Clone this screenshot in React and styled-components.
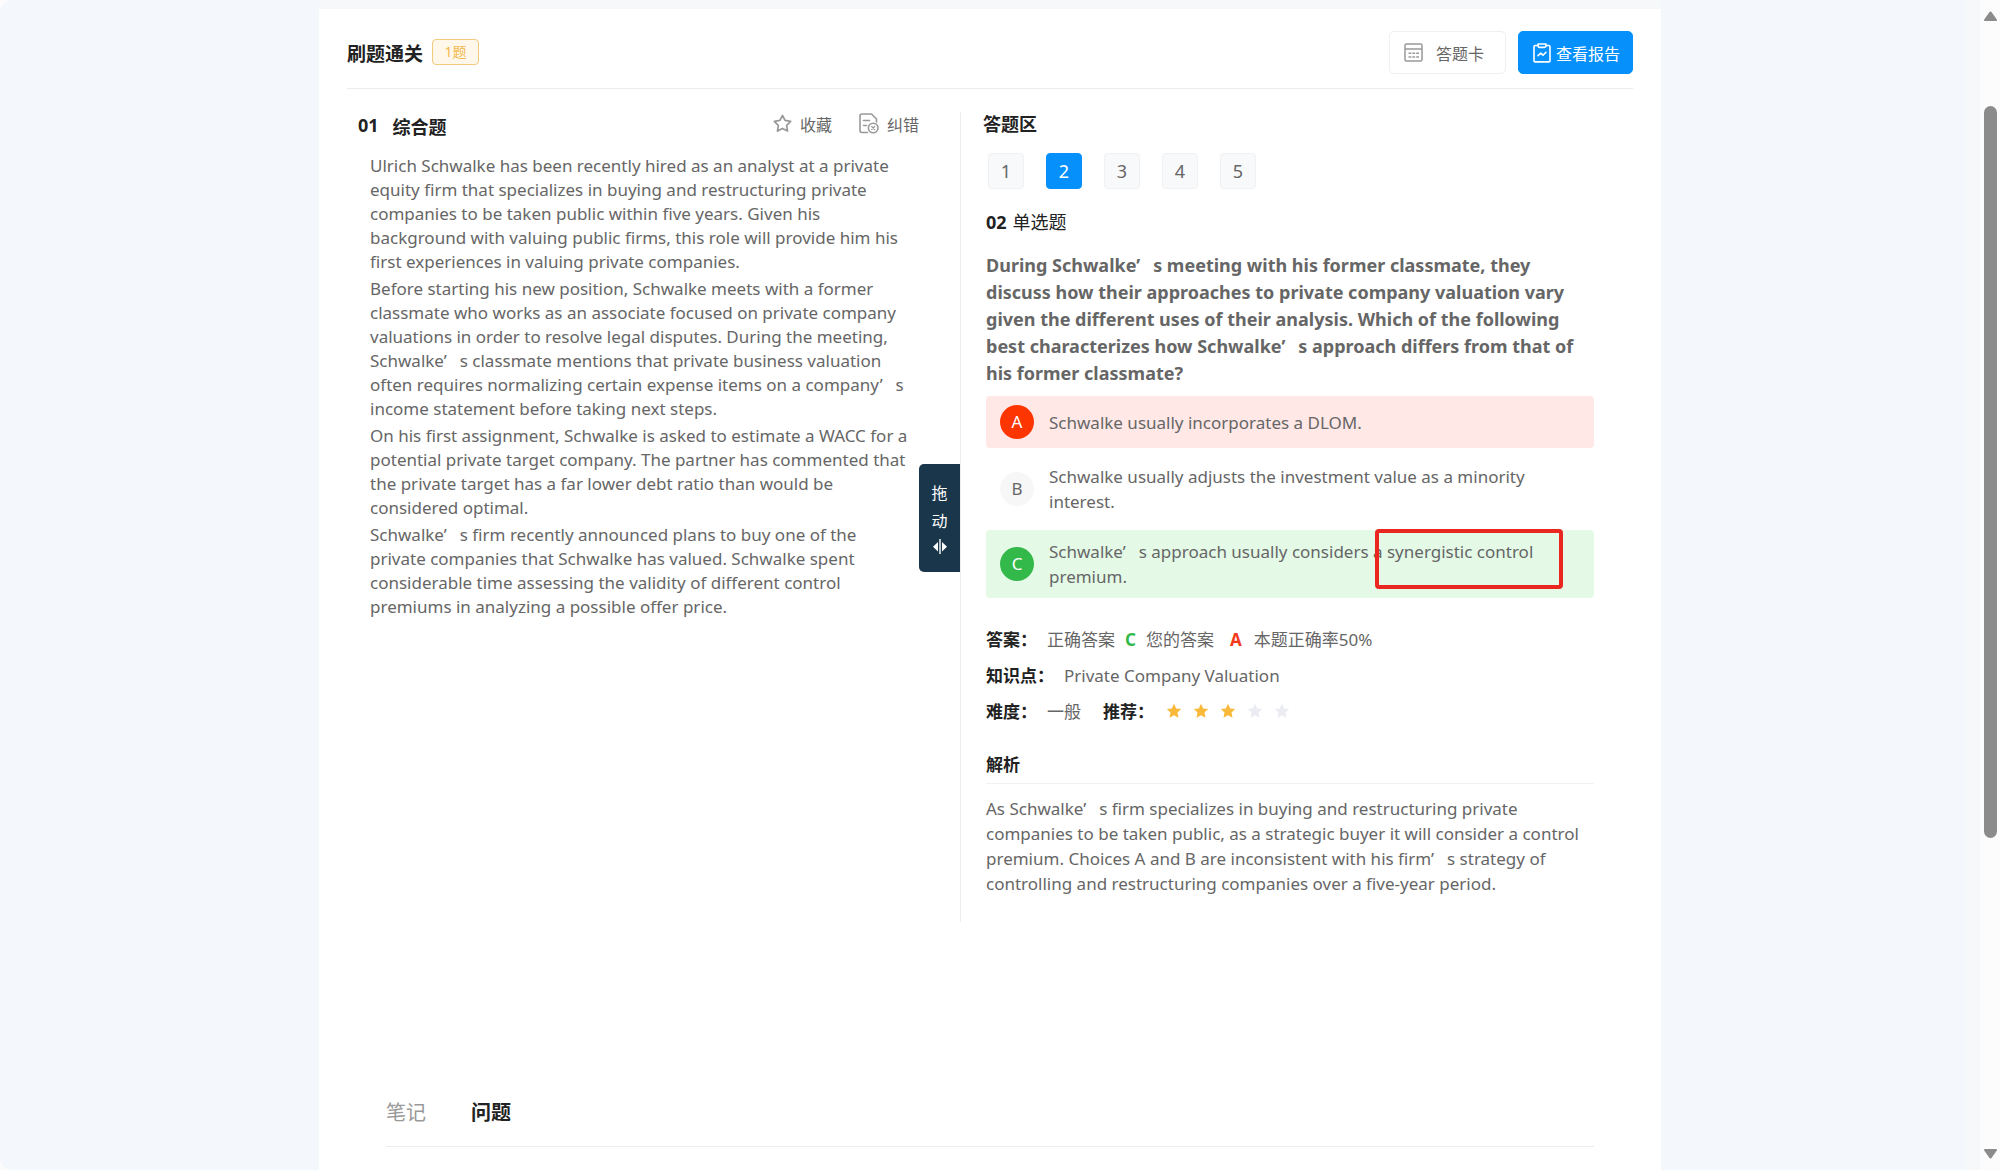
import React, { useState } from 'react';
import styled, { createGlobalStyle, css } from 'styled-components';

const GlobalStyle = createGlobalStyle`
    * {
        box-sizing: border-box;
    }

    body {
        margin: 0;
        background-color: #fcfcfc;
        color: #666;
        font-family: "Noto Sans", "Noto Sans CJK SC", sans-serif;
        font-size: 17px;
    }

    h1, h2, h3, p, ul, ol, dl, dd {
        margin: 0;
        padding: 0;
        font-size: inherit;
    }

    ul, ol {
        list-style: none;
    }

    button {
        padding: 0;
        border: 0;
        background: none;
        color: inherit;
        font: inherit;
        cursor: pointer;
    }

    svg {
        display: block;
        flex: none;
    }
`;

const Page = styled.div`
    display: flex;
    height: 100vh;
    overflow: hidden;
`;

const Content = styled.main`
    flex: 1;
    display: flex;
    justify-content: center;
    padding-top: 9px;
    overflow: hidden;
    background-color: #f4f8fc;
    border-right: 14px solid #f7f8f9;
    border-top-left-radius: 12px;
    border-bottom-left-radius: 12px;
    /* the strip on the right is part of the centred width */
    padding-left: 14px;
`;

const Card = styled.section`
    width: 100%;
    max-width: 1342px;
    padding: 0 28px;
    background-color: #fff;
    box-shadow: 0 -9px 0 #f7f8f9;
`;

const Header = styled.header`
    display: flex;
    align-items: center;
    height: 80px;
    padding-top: 10px;
    border-bottom: 1px solid #ececec;

    h1 {
        color: #222;
        font-size: 19px;
        line-height: 28px;
    }
`;

const CountBadge = styled.span`
    width: 47px;
    margin: 0 auto 4px 9px;
    border: 1px solid #f3cb7c;
    border-radius: 4px;
    background-color: #fff8ea;
    color: #f2b84b;
    font-size: 14px;
    line-height: 24px;
    text-align: center;
`;

const HeaderButton = styled.button`
    display: flex;
    align-items: center;
    gap: ${({ $primary }) => ($primary ? 5 : 13)}px;
    width: ${({ $primary }) => ($primary ? 115 : 117)}px;
    height: 43px;
    margin-left: 12px;
    margin-bottom: 2px;
    padding-left: 14px;
    border: 1px solid ${({ $primary }) => ($primary ? '#0590fc' : '#f0f0f0')};
    border-radius: 5px;
    background-color: ${({ $primary }) => ($primary ? '#0590fc' : '#fff')};
    color: ${({ $primary }) => ($primary ? '#fff' : '#666')};
    font-size: 16px;
`;

const Columns = styled.div`
    display: grid;
    grid-template-columns: 614fr 672fr;
    margin-top: 23px;
`;

const LeftColumn = styled.div`
    position: relative;
    padding: 0 41px 0 11px;
    border-right: 1px solid #eee;
`;

const LeftHead = styled.div`
    display: flex;
    align-items: center;
    height: 28px;

    h2 {
        display: flex;
        gap: 14px;
        margin-right: auto;
        color: #222;
        font-size: 18px;
    }
`;

const ToolButton = styled.button`
    display: flex;
    align-items: center;
    gap: 8px;
    height: 24px;
    margin-left: 27px;
    margin-bottom: 5px;
    font-size: 16px;
`;

const Passage = styled.div`
    margin: 14px 4px 0 12px;
    line-height: 24px;

    p + p {
        margin-top: 3px;
    }
`;

const DragHandle = styled.button`
    position: absolute;
    top: 352px;
    right: 0;
    display: flex;
    flex-direction: column;
    align-items: center;
    justify-content: center;
    width: 41px;
    height: 108px;
    padding-top: 2px;
    border-radius: 5px 0 0 5px;
    background-color: #19364b;
    color: #fff;
    font-size: 16px;
    line-height: 28px;
    cursor: ew-resize;
`;

const RightColumn = styled.div`
    padding: 0 39px 26px 25px;

    h2 {
        margin-left: -3px;
        color: #222;
        font-size: 18px;
        line-height: 24px;
    }
`;

const NumberList = styled.ol`
    display: flex;
    gap: 22px;
    margin: 17px 0 0 2px;
`;

const NumberButton = styled.button`
    width: 36px;
    height: 36px;
    border: 1px solid ${({ $active }) => ($active ? '#0590fc' : '#f0f1f3')};
    border-radius: 4px;
    background-color: ${({ $active }) => ($active ? '#0590fc' : '#f7f9fb')};
    color: ${({ $active }) => ($active ? '#fff' : '#666')};
    font-size: 18px;
`;

const QuestionType = styled.h3`
    display: flex;
    gap: 6px;
    margin-top: 21px;
    color: #222;
    font-size: 18px;
    font-weight: 400;
    line-height: 24px;
`;

const QuestionText = styled.p`
    margin-top: 18px;
    font-size: 18px;
    font-weight: 700;
    line-height: 27px;
`;

const OptionList = styled.ul`
    display: flex;
    flex-direction: column;
    gap: 7px;
    margin-top: 9px;

    li {
        position: relative;
    }
`;

const optionStates = {
    wrong: css`
        background-color: #ffe8e6;

        .letter {
            background-color: #fd3500;
            color: #fff;
        }
    `,
    right: css`
        background-color: #e4fae6;

        .letter {
            background-color: #32b94a;
            color: #fff;
        }
    `,
};

const OptionButton = styled.button`
    display: flex;
    align-items: center;
    gap: 15px;
    width: 100%;
    min-height: 51px;
    padding: 9px 50px 9px 14px;
    border-radius: 4px;
    line-height: 25px;
    text-align: left;

    .letter {
        flex: none;
        width: 34px;
        border-radius: 50%;
        background-color: #f7f7f8;
        line-height: 34px;
        text-align: center;
    }

    ${({ $state }) => optionStates[$state]}
`;

const Highlight = styled.span`
    position: absolute;
    top: -1px;
    right: 31px;
    width: 188px;
    height: 60px;
    border: 4px solid #ea2620;
    border-radius: 4px;
    pointer-events: none;
`;

const ResultList = styled.dl`
    margin-top: 24px;
    line-height: 36px;

    > div {
        display: flex;
        align-items: center;
    }

    dt {
        margin-right: 10px;
        color: #222;
        font-weight: 700;
    }

    dd + dt {
        margin-left: 22px;
    }
`;

const Answer = styled.b`
    margin: ${({ $wide }) => ($wide ? '0 12px 0 16px' : '0 10px')};
    color: ${({ $right }) => ($right ? '#32b94a' : '#f23a1d')};
`;

const Stars = styled.dd`
    display: flex;
    gap: 11px;
    padding: 0 0 3px 2px;
`;

const AnalysisTitle = styled.h3`
    margin-top: 17px;
    border-bottom: 1px solid #f0f0f0;
    color: #222;
    line-height: 36px;
`;

const AnalysisText = styled.p`
    margin-top: 12px;
    line-height: 25px;
`;

const Tabs = styled.nav`
    display: flex;
    gap: 45px;
    margin: 156px 39px 0;
    border-bottom: 1px solid #ececec;
`;

const TabButton = styled.button`
    height: 68px;
    padding-bottom: 2px;
    color: ${({ $active }) => ($active ? '#222' : '#999')};
    font-size: 20px;
    font-weight: ${({ $active }) => ($active ? 700 : 400)};
`;

const QuoteMark = styled.span`
    padding-right: 13px;
`;

const Scrollbar = styled.div`
    display: flex;
    flex-direction: column;
    align-items: center;
    width: 20px;
    padding: 11px 0 11px 1px;
`;

const Track = styled.div`
    flex: 1;
    display: grid;
    grid-template-rows: 85fr 732fr 311fr;
    width: 13px;
`;

const Thumb = styled.div`
    grid-row: 2;
    border-radius: 7px;
    background-color: #8b8b8b;
`;

const CardIcon = () => (
    <svg width="19" height="19" viewBox="0 0 19 19" fill="none" stroke="#999" strokeWidth="1.5">
        <rect x="1" y="1" width="17" height="17" rx="1.5" />
        <path d="M1 6h17M4.500 10.300h2.800M8.300 10.300h2.800M12.200 10.300h2.800M4.500 14h2.800M8.300 14h2.800M12.200 14h2.800" />
    </svg>
);

const ReportIcon = () => (
    <svg width="18" height="20" viewBox="0 0 18 20" fill="none" stroke="#fff" strokeWidth="1.6" strokeLinecap="round" strokeLinejoin="round">
        <path d="M5 2.5H2.2a1.2 1.2 0 0 0-1.2 1.2v14a1.2 1.2 0 0 0 1.2 1.2h13.6a1.2 1.2 0 0 0 1.2-1.2v-14a1.2 1.2 0 0 0-1.2-1.2H13" />
        <path d="M5 1h8v1.800a1.600 1.600 0 0 1-1.600 1.600H6.600a1.600 1.600 0 0 1-1.600-1.600z" />
        <path d="M5 12.700l2.800-2.600 2.200 2.200 3-3" />
    </svg>
);

const CollectIcon = () => (
    <svg width="19" height="19" viewBox="0 0 20 20" fill="none" stroke="#999" strokeWidth="1.8" strokeLinejoin="round">
        <path d="M10 1.500l2.700 5.300 5.900.9-4.200 4.200.9 6L10 15.200l-5.300 2.700.9-6L1.400 7.700l5.900-.9z" />
    </svg>
);

const ErrorIcon = () => (
    <svg width="20" height="21" viewBox="0 0 20 21" fill="none" stroke="#999" strokeWidth="1.600" strokeLinecap="round" strokeLinejoin="round">
        <path d="M8.500 19.500H3a2 2 0 0 1-2-2V3a2 2 0 0 1 2-2h9.500L17.500 6v3" />
        <path d="M4.500 7.500h6M4.500 12.500h3" />
        <circle cx="14.200" cy="15" r="4.800" />
        <path d="M12.700 13.500l3 3M15.700 13.500l-3 3" strokeWidth="1.200" />
    </svg>
);

const DragIcon = () => (
    <svg width="14" height="24" viewBox="0 0 14 24" fill="#fff">
        <path d="M7.700 4v15H6.300V4zM5 7v9.500L0 11.700zM9 7v9.500l5-4.800z" />
    </svg>
);

const StarIcon = ({ filled }) => (
    <svg width="16" height="16" viewBox="0 0 16 16" fill={filled ? '#f9b93a' : '#ebecf1'}>
        <path d="M8 .8l2.200 4.700 5 .6-3.700 3.500 1 5.100L8 12.200l-4.500 2.500 1-5.100L.8 6.100l5-.6z" />
    </svg>
);

const ArrowIcon = ({ down }) => (
    <svg width="13" height="10" viewBox="0 0 13 10" fill="#8b8b8b">
        <path d={down ? 'M1 0h11a1 1 0 0 1 .8 1.600L7.500 9a1.300 1.300 0 0 1-2 0L.2 1.600A1 1 0 0 1 1 0z' : 'M1 10h11a1 1 0 0 0 .8-1.600L7.500 1a1.300 1.300 0 0 0-2 0L.2 8.400A1 1 0 0 0 1 10z'} />
    </svg>
);

// apostrophes take a full-width cell, like the rest of the Chinese punctuation
const Quoted = ({ children }) =>
    children.split('’').map((part, i) => (
        <React.Fragment key={i}>
            {i > 0 && <QuoteMark>’</QuoteMark>}
            {part}
        </React.Fragment>
    ));

const passage = [
    'Ulrich Schwalke has been recently hired as an analyst at a private equity firm that specializes in buying and restructuring private companies to be taken public within five years. Given his background with valuing public firms, this role will provide him his first experiences in valuing private companies.',
    'Before starting his new position, Schwalke meets with a former classmate who works as an associate focused on private company valuations in order to resolve legal disputes. During the meeting, Schwalke’s classmate mentions that private business valuation often requires normalizing certain expense items on a company’s income statement before taking next steps.',
    'On his first assignment, Schwalke is asked to estimate a WACC for a potential private target company. The partner has commented that the private target has a far lower debt ratio than would be considered optimal.',
    'Schwalke’s firm recently announced plans to buy one of the private companies that Schwalke has valued. Schwalke spent considerable time assessing the validity of different control premiums in analyzing a possible offer price.',
];

const options = [
    { letter: 'A', text: 'Schwalke usually incorporates a DLOM.', state: 'wrong' },
    { letter: 'B', text: 'Schwalke usually adjusts the investment value as a minority interest.' },
    { letter: 'C', text: 'Schwalke’s approach usually considers a synergistic control premium.', state: 'right', marked: true },
];

const App = () => {
    const [current, setCurrent] = useState(2);
    const [tab, setTab] = useState('问题');

    return (
        <Page>
            <GlobalStyle />
            <Content>
                <Card>
                    <Header>
                        <h1>刷题通关</h1>
                        <CountBadge>1题</CountBadge>
                        <HeaderButton type='button'><CardIcon />答题卡</HeaderButton>
                        <HeaderButton type='button' $primary><ReportIcon />查看报告</HeaderButton>
                    </Header>
                    <Columns>
                        <LeftColumn>
                            <LeftHead>
                                <h2><span>01</span><span>综合题</span></h2>
                                <ToolButton type='button'><CollectIcon />收藏</ToolButton>
                                <ToolButton type='button'><ErrorIcon />纠错</ToolButton>
                            </LeftHead>
                            <Passage>
                                {passage.map(text => <p key={text}><Quoted>{text}</Quoted></p>)}
                            </Passage>
                            <DragHandle type='button'>
                                <span>拖</span>
                                <span>动</span>
                                <DragIcon />
                            </DragHandle>
                        </LeftColumn>
                        <RightColumn>
                            <h2>答题区</h2>
                            <NumberList>
                                {[1, 2, 3, 4, 5].map(n => (
                                    <li key={n}>
                                        <NumberButton type='button' $active={n === current} onClick={() => setCurrent(n)}>{n}</NumberButton>
                                    </li>
                                ))}
                            </NumberList>
                            <QuestionType><b>02</b><span>单选题</span></QuestionType>
                            <QuestionText>
                                <Quoted>During Schwalke’s meeting with his former classmate, they discuss how their approaches to private company valuation vary given the different uses of their analysis. Which of the following best characterizes how Schwalke’s approach differs from that of his former classmate?</Quoted>
                            </QuestionText>
                            <OptionList>
                                {options.map(({ letter, text, state, marked }) => (
                                    <li key={letter}>
                                        <OptionButton type='button' $state={state}>
                                            <span className='letter'>{letter}</span>
                                            <span><Quoted>{text}</Quoted></span>
                                        </OptionButton>
                                        {marked && <Highlight />}
                                    </li>
                                ))}
                            </OptionList>
                            <ResultList>
                                <div>
                                    <dt>答案：</dt>
                                    <dd>正确答案<Answer $right>C</Answer>您的答案<Answer $wide>A</Answer>本题正确率50%</dd>
                                </div>
                                <div>
                                    <dt>知识点：</dt>
                                    <dd>Private Company Valuation</dd>
                                </div>
                                <div>
                                    <dt>难度：</dt>
                                    <dd>一般</dd>
                                    <dt>推荐：</dt>
                                    <Stars>
                                        {[1, 2, 3, 4, 5].map(n => <StarIcon key={n} filled={n <= 3} />)}
                                    </Stars>
                                </div>
                            </ResultList>
                            <AnalysisTitle>解析</AnalysisTitle>
                            <AnalysisText>
                                <Quoted>As Schwalke’s firm specializes in buying and restructuring private companies to be taken public, as a strategic buyer it will consider a control premium. Choices A and B are inconsistent with his firm’s strategy of controlling and restructuring companies over a five-year period.</Quoted>
                            </AnalysisText>
                        </RightColumn>
                    </Columns>
                    <Tabs>
                        {['笔记', '问题'].map(name => (
                            <TabButton key={name} type='button' $active={name === tab} onClick={() => setTab(name)}>{name}</TabButton>
                        ))}
                    </Tabs>
                </Card>
            </Content>
            <Scrollbar>
                <ArrowIcon />
                <Track><Thumb /></Track>
                <ArrowIcon down />
            </Scrollbar>
        </Page>
    );
};

export default App;
